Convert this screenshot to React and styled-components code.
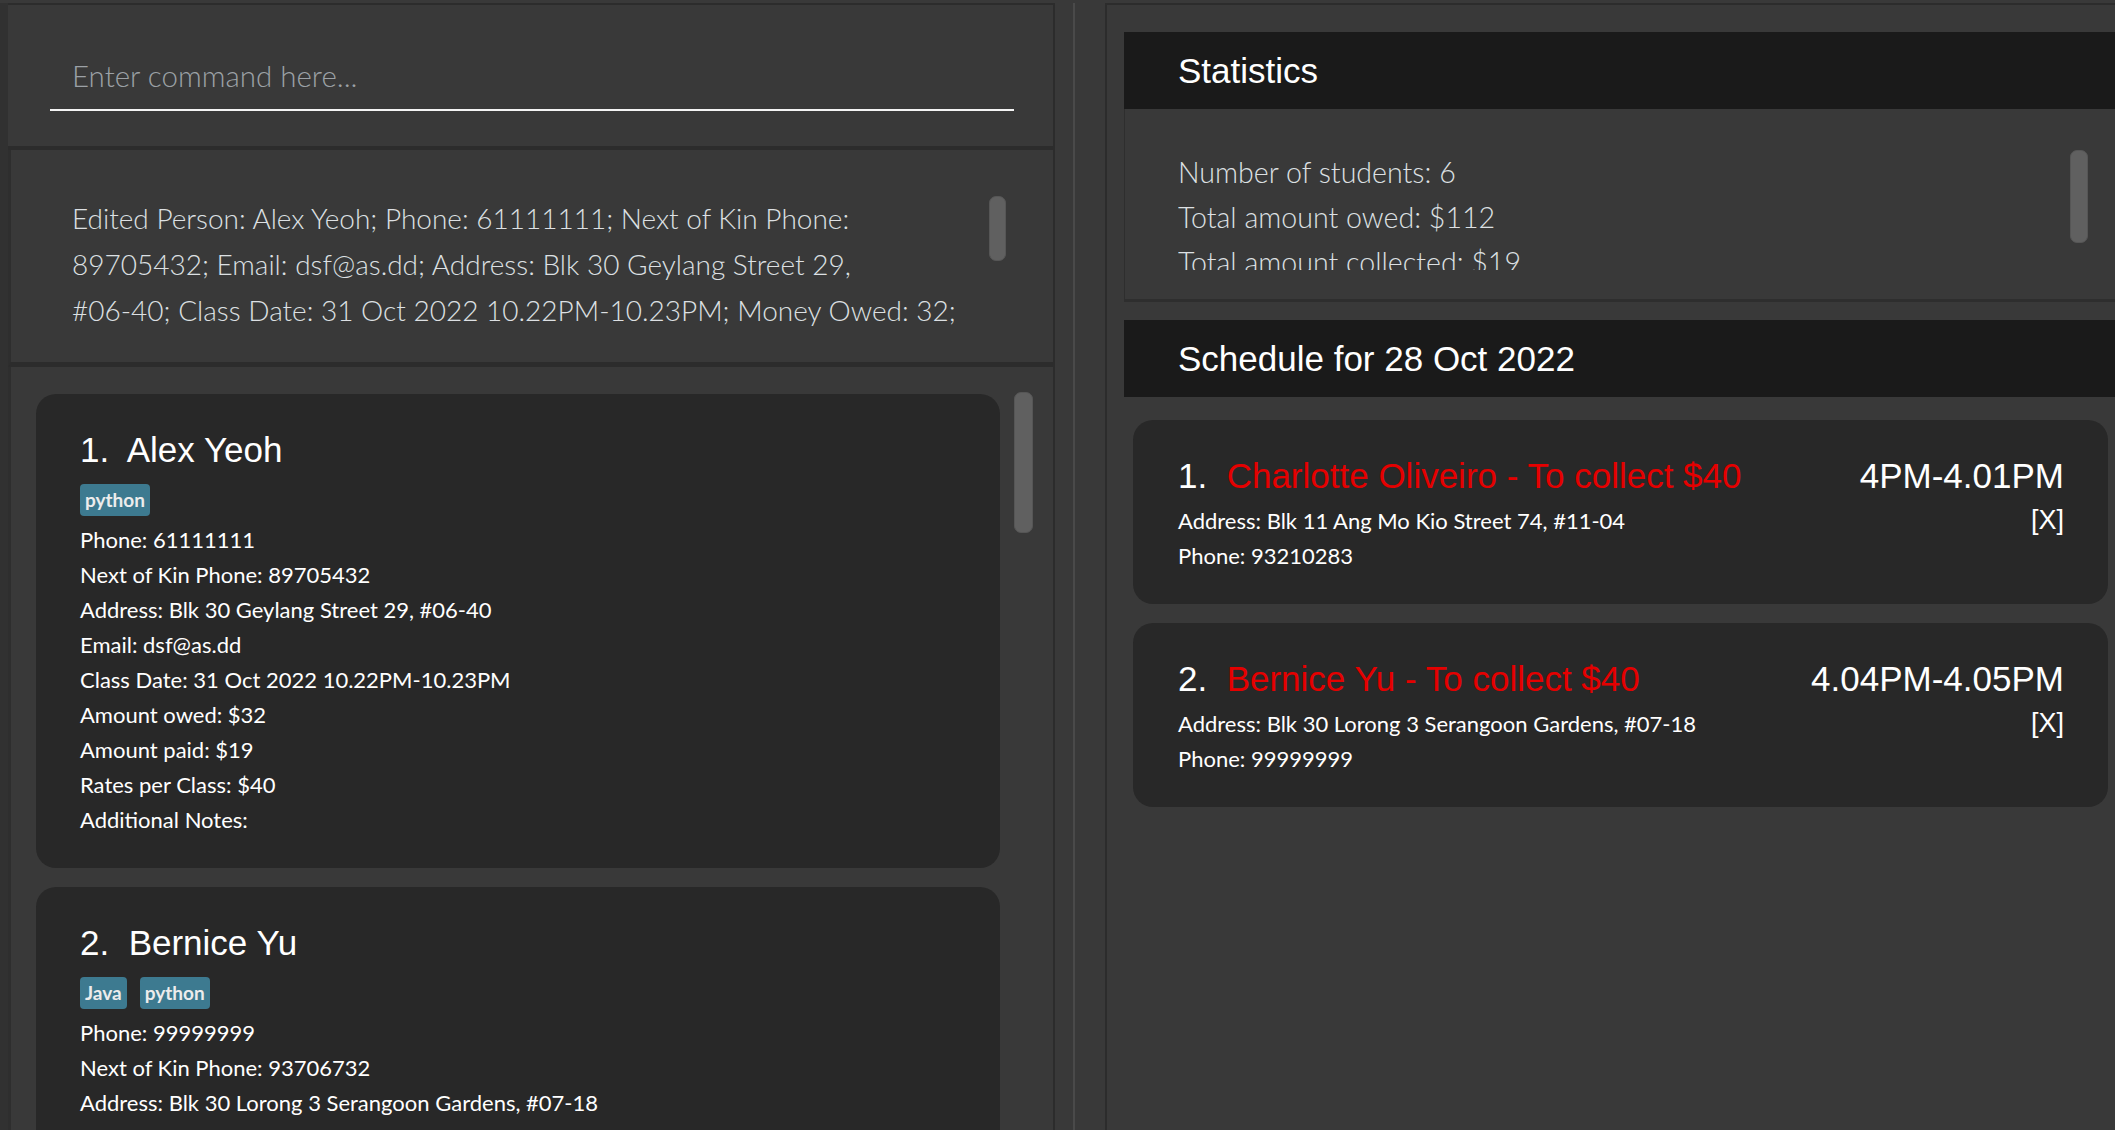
import React from 'react';
import styled, { createGlobalStyle } from 'styled-components';

const GlobalStyle = createGlobalStyle`
  html, body {
    margin: 0;
    padding: 0;
    background: #393939;
  }
  * {
    box-sizing: border-box;
  }
`;

const persons = [
  {
    name: 'Alex Yeoh',
    tags: ['python'],
    lines: [
      'Phone: 61111111',
      'Next of Kin Phone: 89705432',
      'Address: Blk 30 Geylang Street 29, #06-40',
      'Email: dsf@as.dd',
      'Class Date: 31 Oct 2022 10.22PM-10.23PM',
      'Amount owed: $32',
      'Amount paid: $19',
      'Rates per Class: $40',
      'Additional Notes:',
    ],
  },
  {
    name: 'Bernice Yu',
    tags: ['Java', 'python'],
    lines: [
      'Phone: 99999999',
      'Next of Kin Phone: 93706732',
      'Address: Blk 30 Lorong 3 Serangoon Gardens, #07-18',
      'Email: berniceyu@example.com',
      'Class Date: 28 Oct 2022 4.04PM-4.05PM',
      'Amount owed: $0',
      'Amount paid: $0',
      'Rates per Class: $40',
      'Additional Notes:',
    ],
  },
];

const schedule = [
  { name: 'Charlotte Oliveiro - To collect $40', time: '4PM-4.01PM', address: 'Blk 11 Ang Mo Kio Street 74, #11-04', phone: '93210283' },
  { name: 'Bernice Yu - To collect $40', time: '4.04PM-4.05PM', address: 'Blk 30 Lorong 3 Serangoon Gardens, #07-18', phone: '99999999' },
];

// the feedback box wraps like the desktop app does, so the lines are kept as they appear
const resultLines = [
  'Edited Person: Alex Yeoh; Phone: 61111111; Next of Kin Phone:',
  '89705432; Email: dsf@as.dd; Address: Blk 30 Geylang Street 29,',
  '#06-40; Class Date: 31 Oct 2022 10.22PM-10.23PM; Money Owed: 32;',
  'Money Paid: 19; Rates Per Class: 40; Additional Notes: ; Tags:',
  '[python]',
];

const Window = styled.div`
  display: flex;
  height: 1130px;
  padding-top: 3px;
  background: #393939;
  overflow: hidden;
`;

const LeftPane = styled.div`
  width: 1055px;
  flex-shrink: 0;
  display: flex;
  flex-direction: column;
  border-left: 8px solid #313131;
`;

const CommandBox = styled.div`
  height: 147px;
  padding: 52px 39px 0 42px;
  border-top: 2px solid #2c2c2c;
  border-right: 2px solid #2c2c2c;
  border-bottom: 4px solid #2c2c2c;
`;

const CommandInput = styled.div`
  height: 54px;
  padding-left: 22px;
  border-bottom: 2px solid #f4f4f4;
  font-family: Lato, "Open Sans", sans-serif;
  font-weight: 300;
  font-size: 29.5px;
  line-height: 38px;
  color: #9ca1a6;
`;

const ResultBox = styled.div`
  height: 217px;
  display: flex;
  align-items: flex-start;
  padding: 45px 0 0 61px;
  border-left: 3px solid #2e2e2e;
  border-right: 2px solid #2c2c2c;
  border-bottom: 5px solid #2c2c2c;
`;

const ResultText = styled.div`
  width: 888px;
  height: 138px;
  overflow-x: visible;
  overflow-y: clip;
  white-space: nowrap;
  font-family: Lato, "Open Sans", sans-serif;
  font-weight: 300;
  font-size: 28px;
  line-height: 46px;
  color: #dde0e3;
`;

const Thumb = styled.div`
  flex-shrink: 0;
  width: ${(p) => p.$w}px;
  height: ${(p) => p.$h}px;
  margin-left: ${(p) => p.$left || 0}px;
  margin-top: ${(p) => p.$top || 0}px;
  margin-right: ${(p) => p.$right || 0}px;
  background: #606060;
  border: 1px solid #565656;
  border-radius: 7px;
`;

const ListPanel = styled.div`
  flex: 1;
  display: flex;
  align-items: flex-start;
  padding: 27px 0 0 25px;
  border-left: 3px solid #2e2e2e;
  border-right: 2px solid #2c2c2c;
  overflow: hidden;
`;

const CardColumn = styled.div`
  width: 964px;
  flex-shrink: 0;
  display: flex;
  flex-direction: column;
  gap: 19px;
`;

const PersonCard = styled.div`
  background: #282828;
  border-radius: 20px;
  padding: 36px 0 31px 44px;
`;

const Heading = styled.div`
  display: flex;
  justify-content: space-between;
  font-family: "Liberation Sans", Arial, sans-serif;
  font-size: 35px;
  line-height: 40px;
  color: #ffffff;
  white-space: pre;
`;

const Red = styled.span`
  color: #e50000;
`;

const Tags = styled.div`
  display: flex;
  gap: 13px;
  margin-top: 14px;
`;

const Tag = styled.span`
  height: 32px;
  padding: 0 5px;
  border-radius: 4px;
  background: #3d7a90;
  color: #ececec;
  font-family: Lato, "Open Sans", sans-serif;
  font-weight: 700;
  font-size: 19px;
  line-height: 32px;
`;

const Details = styled.div`
  margin-top: ${(p) => p.$gap}px;
  font-family: Lato, "Open Sans", sans-serif;
  font-size: 22px;
  line-height: 35px;
  color: #ffffff;
`;

const DetailRow = styled.div`
  display: flex;
  justify-content: space-between;
`;

const Close = styled.span`
  font-family: "Liberation Sans", Arial, sans-serif;
  font-size: 27px;
  color: #ffffff;
`;

const Splitter = styled.div`
  width: 50px;
  flex-shrink: 0;
  display: flex;
  padding-left: 18px;
  &::before {
    content: '';
    width: 2px;
    background: #4a4a4a;
  }
`;

const RightPane = styled.div`
  flex: 1;
  display: flex;
  flex-direction: column;
  padding: 27px 7px 0 17px;
  border-left: 2px solid #2c2c2c;
  border-top: 2px solid #2c2c2c;
`;

const SectionHeader = styled.div`
  height: 77px;
  padding-left: 54px;
  margin-right: -7px;
  background: #1a1a1a;
  font-family: "Liberation Sans", Arial, sans-serif;
  font-size: 35px;
  line-height: 77px;
  color: #ffffff;
`;

const StatsBody = styled.div`
  height: 193px;
  display: flex;
  align-items: flex-start;
  padding: 41px 0 0 53px;
  margin-right: -7px;
  margin-bottom: 18px;
  border-left: 1px solid #2e2e2e;
  border-bottom: 3px solid #2e2e2e;
`;

const StatsText = styled.div`
  flex: 1;
  height: 120px;
  overflow: hidden;
  font-family: Lato, "Open Sans", sans-serif;
  font-weight: 300;
  font-size: 28.6px;
  line-height: 45px;
  color: #dde0e3;
`;

const ScheduleList = styled.div`
  display: flex;
  flex-direction: column;
  gap: 19px;
  padding: 23px 0 0 9px;
`;

const ScheduleCard = styled.div`
  height: 184px;
  background: #282828;
  border-radius: 20px;
  padding: 36px 44px 0 45px;
`;

export default function App() {
  return (
    <>
      <GlobalStyle />
      <Window>
        <LeftPane>
          <CommandBox>
            <CommandInput>Enter command here...</CommandInput>
          </CommandBox>
          <ResultBox>
            <ResultText>
              {resultLines.map((l) => (
                <div key={l}>{l}</div>
              ))}
            </ResultText>
            <Thumb $w={17} $h={65} $left={29} $top={1} />
          </ResultBox>
          <ListPanel>
            <CardColumn>
              {persons.map((p, i) => (
                <PersonCard key={p.name}>
                  <Heading>
                    <span>{`${i + 1}.  ${p.name}`}</span>
                  </Heading>
                  <Tags>
                    {p.tags.map((t) => (
                      <Tag key={t}>{t}</Tag>
                    ))}
                  </Tags>
                  <Details $gap={6}>
                    {p.lines.map((l) => (
                      <div key={l}>{l}</div>
                    ))}
                  </Details>
                </PersonCard>
              ))}
            </CardColumn>
            <Thumb $w={19} $h={141} $left={14} $top={-2} />
          </ListPanel>
        </LeftPane>
        <Splitter />
        <RightPane>
          <SectionHeader>Statistics</SectionHeader>
          <StatsBody>
            <StatsText>
              <div>Number of students: 6</div>
              <div>Total amount owed: $112</div>
              <div>Total amount collected: $19</div>
            </StatsText>
            <Thumb $w={18} $h={93} $right={27} />
          </StatsBody>
          <SectionHeader>Schedule for 28 Oct 2022</SectionHeader>
          <ScheduleList>
            {schedule.map((s, i) => (
              <ScheduleCard key={s.name}>
                <Heading>
                  <span>
                    {`${i + 1}.  `}
                    <Red>{s.name}</Red>
                  </span>
                  <span>{s.time}</span>
                </Heading>
                <Details $gap={7}>
                  <DetailRow>
                    <span>Address: {s.address}</span>
                    <Close>[X]</Close>
                  </DetailRow>
                  <div>Phone: {s.phone}</div>
                </Details>
              </ScheduleCard>
            ))}
          </ScheduleList>
        </RightPane>
      </Window>
    </>
  );
}
